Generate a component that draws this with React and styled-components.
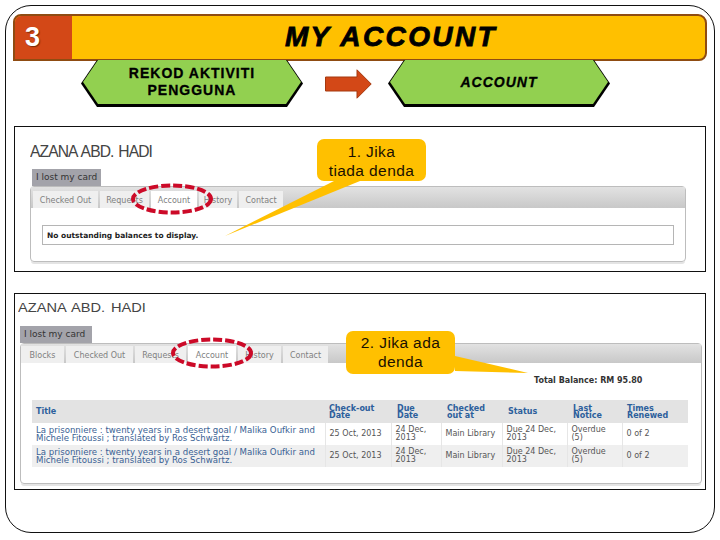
import React from 'react';
import styled, { createGlobalStyle } from 'styled-components';

const GlobalStyle = createGlobalStyle`
    html, body {
        margin: 0;
        padding: 0;
        background: #fff;
        font-family: "Liberation Sans", Arial, sans-serif;
    }
`;

const Slide = styled.div`
    box-sizing: border-box;
    width: 710px;
    height: 528px;
    margin: 5px 0 0 5px;
    padding: 8px 7px 0 7px;
    border: 1px solid #111;
    border-radius: 26px;
    background: #fff;
`;

const Header = styled.header`
    display: flex;
    box-sizing: border-box;
    height: 47px;
    border: 2px solid #8f4c12;
    border-radius: 8px 9px 8px 0;
    overflow: hidden;
    background: #ffc000;
`;

const StepNumber = styled.div`
    width: 57px;
    padding-left: 10px;
    box-sizing: border-box;
    background: #d34817;
    color: #fff;
    font-size: 27px;
    font-weight: bold;
    line-height: 42px;
    text-shadow: 1px 1px 1px #7a2a08;
`;

const Title = styled.h1`
    flex: 1;
    margin: 0;
    padding-left: 5px;
    text-align: center;
    color: #000;
    font-size: 28px;
    font-style: italic;
    font-weight: bold;
    letter-spacing: 2.4px;
    line-height: 42px;
    -webkit-text-stroke: 0.8px #000;
`;

const Steps = styled.div`
    display: flex;
    align-items: flex-start;
    height: 46px;
    margin-top: -1px;
    padding-left: 68px;
`;

const Hex = styled.div`
    width: 222px;
    height: 47px;
    background: #000;
    clip-path: polygon(0 50%, 16px 0, 206px 0, 100% 50%, 206px 100%, 16px 100%);
`;

const HexFill = styled.div`
    display: flex;
    align-items: center;
    justify-content: center;
    height: 44px;
    margin: 0 2px;
    background: #92d050;
    clip-path: polygon(0 50%, 15px 0, 203px 0, 100% 50%, 203px 100%, 15px 100%);
    text-align: center;
    color: #000;
    font-weight: bold;
    font-size: 14px;
    font-style: ${(p) => (p.$italic ? 'italic' : 'normal')};
    letter-spacing: 1px;
    line-height: 17px;
    -webkit-text-stroke: 0.3px #000;
`;

const ArrowIcon = styled.svg`
    flex: none;
    margin: 9px 16px 0 22px;
`;

const Panel = styled.section`
    position: relative;
    box-sizing: border-box;
    width: 692px;
    height: ${(p) => p.$height}px;
    margin-top: ${(p) => p.$top}px;
    margin-left: 1px;
    padding: ${(p) => p.$pad};
    border: 1px solid #111;
    background: #fff;
`;

const Patron = styled.div`
    width: fit-content;
    color: #444;
    font-size: ${(p) => p.$size}px;
    letter-spacing: ${(p) => p.$spacing}px;
    word-spacing: 1.5px;
    line-height: 17px;
    white-space: nowrap;
    transform-origin: left center;
    transform: scaleX(${(p) => p.$stretch});
`;

const LostCard = styled.div`
    box-sizing: border-box;
    width: ${(p) => p.$w}px;
    height: 17px;
    margin-top: ${(p) => p.$top}px;
    margin-left: 2px;
    padding-left: 4px;
    background: #a3a3aa;
    color: #333;
    font-family: "DejaVu Sans", sans-serif;
    font-size: 9px;
    line-height: 17px;
    white-space: nowrap;
`;

const Account = styled.div`
    box-sizing: border-box;
    height: ${(p) => p.$height}px;
    width: ${(p) => p.$width}px;
    margin-left: ${(p) => p.$left}px;
    border: 1px solid #bdbdbd;
    border-radius: 4px;
    box-shadow: 0 3px 0 -1px #e4e4e4;
`;

const TabBar = styled.div`
    display: flex;
    gap: 2px;
    height: ${(p) => p.$height}px;
    padding: ${(p) => p.$top}px 0 0 ${(p) => p.$left}px;
    box-sizing: border-box;
    background: linear-gradient(#e2e2e2, #c8c8c8);
`;

const Tab = styled.div`
    box-sizing: border-box;
    width: ${(p) => p.$w}px;
    background: ${(p) => (p.$active ? '#fff' : '#efefef')};
    color: #808080;
    font-family: "DejaVu Sans", sans-serif;
    font-size: 8px;
    line-height: 19px;
    text-align: center;
    white-space: nowrap;
    overflow: hidden;
`;

const Notice = styled.div`
    box-sizing: border-box;
    width: 632px;
    height: 20px;
    margin: 17px 0 0 11px;
    padding-left: 4px;
    border: 1px solid #b5b5b5;
    color: #222;
    font-family: "DejaVu Sans", sans-serif;
    font-size: 7.5px;
    font-weight: bold;
    line-height: 19px;
`;

const Balance = styled.div`
    margin: 13px 0 0 513px;
    color: #333;
    font-family: "DejaVu Sans", sans-serif;
    font-size: 8px;
    font-weight: bold;
    line-height: 9px;
    white-space: nowrap;
`;

const LoansTable = styled.table`
    width: 656px;
    margin: 15px 0 0 11px;
    border-collapse: collapse;
    table-layout: fixed;
    font-family: "DejaVu Sans", sans-serif;
    font-size: 8px;
    line-height: 7px;
`;

const HeadRow = styled.tr`
    height: 23px;
    background: #e3e3e3;
`;

const Head = styled.th`
    padding: 0 0 0 ${(p) => p.$left ?? 4}px;
    color: #2d5f9c;
    font-weight: bold;
    text-align: left;
`;

const Row = styled.tr`
    height: 22px;
    background: ${(p) => (p.$even ? '#efefef' : '#fff')};
`;

const Cell = styled.td`
    padding: 0 0 0 ${(p) => p.$left ?? 4}px;
    border-left: ${(p) => (p.$first ? '0' : '1px solid #e6e6e6')};
    color: ${(p) => (p.$link ? '#3a5f94' : '#555')};
    font-size: ${(p) => (p.$link ? '8.6px' : '8px')};
    line-height: 8px;
    white-space: pre-line;
`;

const Callout = styled.div`
    position: absolute;
    left: ${(p) => p.$x}px;
    top: ${(p) => p.$y}px;
    width: 109px;
    height: ${(p) => p.$h}px;
    padding-top: ${(p) => p.$pad}px;
    box-sizing: border-box;
    border-radius: 7px;
    background: #ffc000;
    color: #1a1000;
    font-size: 15.5px;
    letter-spacing: 0.4px;
    line-height: 19px;
    text-align: center;
`;

const Tail = styled.svg`
    position: absolute;
    left: ${(p) => p.$x}px;
    top: ${(p) => p.$y}px;
    overflow: visible;
`;

const DashedRing = styled.svg`
    position: absolute;
    left: ${(p) => p.$x}px;
    top: ${(p) => p.$y}px;
`;

const Ring = ({ x, y }) => (
    <DashedRing $x={x} $y={y} width="84" height="34" viewBox="0 0 84 34">
        <ellipse cx="42" cy="17" rx="39" ry="13.5" fill="none" stroke="#cc0a28" strokeWidth="4" strokeDasharray="9 3" />
    </DashedRing>
);

const firstTabs = [
    ['Checked Out', 65],
    ['Requests', 49],
    ['Account', 46, true],
    ['History', 38],
    ['Contact', 44],
];

const secondTabs = [
    ['Blocks', 43],
    ['Checked Out', 67],
    ['Requests', 51],
    ['Account', 48, true],
    ['History', 43],
    ['Contact', 45],
];

const loan = [
    '25 Oct, 2013',
    '24 Dec,\n2013',
    'Main Library',
    'Due 24 Dec,\n2013',
    'Overdue\n(5)',
    '0 of 2',
];

const columns = [293, 66, 50, 61, 65, 55, 66];

export default function App() {
    return (
        <>
            <GlobalStyle />
            <Slide>
                <Header>
                    <StepNumber>3</StepNumber>
                    <Title>MY ACCOUNT</Title>
                </Header>
                <Steps>
                    <Hex>
                        <HexFill>REKOD AKTIVITI<br />PENGGUNA</HexFill>
                    </Hex>
                    <ArrowIcon width="47" height="30" viewBox="0 0 47 30">
                        <path d="M0.5 8 H32 V0.8 L46.2 15 L32 29.2 V22 H0.5 Z" fill="#d34817" stroke="#a5390f" />
                    </ArrowIcon>
                    <Hex>
                        <HexFill $italic>ACCOUNT</HexFill>
                    </Hex>
                </Steps>

                <Panel $top={20} $height={146} $pad="16px 0 0 15px">
                    <Patron $size={17} $spacing={-1} $stretch={0.92}>AZANA ABD. HADI</Patron>
                    <LostCard $w={69} $top={9}>I lost my card</LostCard>
                    <Account $width={656} $height={76} $left={0}>
                        <TabBar $height={21} $top={4} $left={2}>
                            {firstTabs.map(([label, w, active]) => (
                                <Tab key={label} $w={w} $active={active}>{label}</Tab>
                            ))}
                        </TabBar>
                        <Notice>No outstanding balances to display.</Notice>
                    </Account>
                    <Tail $x={209} $y={54} width="125" height="56" viewBox="0 0 125 56">
                        <polygon points="110,0 136,0 1,55" fill="#ffc000" />
                    </Tail>
                    <Ring x={115} y={55} />
                    <Callout $x={302} $y={12} $h={42} $pad={3}>1. Jika<br />tiada denda</Callout>
                </Panel>

                <Panel $top={21} $height={197} $pad="6px 0 0 3px">
                    <Patron $size={12.5} $spacing={0} $stretch={1.17}>AZANA ABD. HADI</Patron>
                    <LostCard $w={72} $top={9}>I lost my card</LostCard>
                    <Account $width={682} $height={141} $left={2}>
                        <TabBar $height={19} $top={2} $left={0}>
                            {secondTabs.map(([label, w, active]) => (
                                <Tab key={label} $w={w} $active={active}>{label}</Tab>
                            ))}
                        </TabBar>
                        <Balance>Total Balance: RM 95.80</Balance>
                        <LoansTable>
                            <colgroup>
                                {columns.map((w, i) => <col key={i} width={w} />)}
                            </colgroup>
                            <thead>
                                <HeadRow>
                                    <Head>Title</Head>
                                    <Head>Check-out<br />Date</Head>
                                    <Head $left={6}>Due<br />Date</Head>
                                    <Head $left={6}>Checked<br />out at</Head>
                                    <Head $left={6}>Status</Head>
                                    <Head $left={6}>Last<br />Notice</Head>
                                    <Head $left={5}>Times<br />Renewed</Head>
                                </HeadRow>
                            </thead>
                            <tbody>
                                {[false, true].map((even) => (
                                    <Row key={String(even)} $even={even}>
                                        <Cell $first $link>{'La prisonniere : twenty years in a desert goal / Malika Oufkir and\nMichele Fitoussi ; translated by Ros Schwartz.'}</Cell>
                                        {loan.map((text) => <Cell key={text}>{text}</Cell>)}
                                    </Row>
                                ))}
                            </tbody>
                        </LoansTable>
                    </Account>
                    <Tail $x={440} $y={62} width="90" height="18" viewBox="0 0 90 18">
                        <polygon points="0,0 0,15 73,17" fill="#ffc000" />
                    </Tail>
                    <Ring x={155} y={42} />
                    <Callout $x={331} $y={37} $h={43} $pad={2}>2. Jika ada<br />denda</Callout>
                </Panel>
            </Slide>
        </>
    );
}
